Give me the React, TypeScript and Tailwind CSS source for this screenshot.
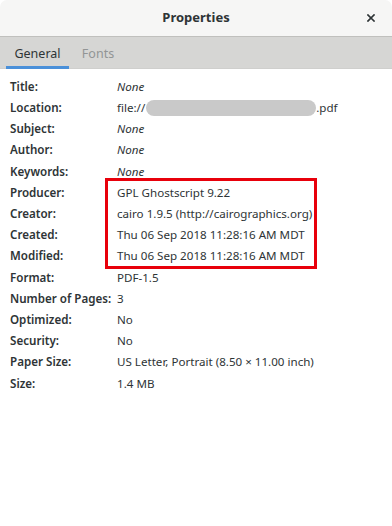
import React from 'react';

type Row = { label: string; value: React.ReactNode; italic?: boolean };

const rows: Row[] = [
    { label: 'Title:', value: 'None', italic: true },
    {
        label: 'Location:',
        value: (
            <span className="flex items-center">
                file://
                <span className="inline-block h-[16px] w-[170px] rounded-full bg-[#c9c9c9] ml-[1px]" />
                .pdf
            </span>
        ),
    },
    { label: 'Subject:', value: 'None', italic: true },
    { label: 'Author:', value: 'None', italic: true },
    { label: 'Keywords:', value: 'None', italic: true },
    { label: 'Producer:', value: 'GPL Ghostscript 9.22' },
    { label: 'Creator:', value: 'cairo 1.9.5 (http://cairographics.org)' },
    { label: 'Created:', value: 'Thu 06 Sep 2018 11:28:16 AM MDT' },
    { label: 'Modified:', value: 'Thu 06 Sep 2018 11:28:16 AM MDT' },
    { label: 'Format:', value: 'PDF-1.5' },
    { label: 'Number of Pages:', value: '3' },
    { label: 'Optimized:', value: 'No' },
    { label: 'Security:', value: 'No' },
    { label: 'Paper Size:', value: 'US Letter, Portrait (8.50 × 11.00 inch)' },
    { label: 'Size:', value: '1.4 MB' },
];

export default function App() {
    return (
        <div
            className="w-[392px] h-[526px] bg-white flex flex-col text-[#2e3436] overflow-hidden rounded-t-[7px]"
            style={{ fontFamily: '"Noto Sans", "Open Sans", sans-serif' }}
        >
            {/* header bar */}
            <div className="h-[37px] shrink-0 bg-[#f6f6f5] border-b border-[#c0c0bd] relative flex items-center justify-center">
                <span className="text-[13px] font-bold">Properties</span>
                <button className="absolute right-[14px] top-[11px] w-[14px] h-[14px] flex items-center justify-center">
                    <svg width="8" height="8" viewBox="0 0 8 8">
                        <path d="M1 1L7 7M7 1L1 7" stroke="#2e3436" strokeWidth="1.7" strokeLinecap="square" />
                    </svg>
                </button>
            </div>

            {/* tabs */}
            <div className="h-[32px] shrink-0 bg-[#d6d6d4] flex items-stretch pl-[6px] border-b border-[#cfcfcd]">
                <div className="relative w-[63px] flex items-center justify-center pt-[3px] text-[12.5px]">
                    General
                    <div className="absolute left-0 right-0 bottom-[-1px] h-[3px] bg-[#4a90d9]" />
                </div>
                <div className="w-[58px] flex items-center justify-center pt-[3px] text-[12.5px] text-[#929595]">
                    Fonts
                </div>
            </div>

            {/* properties */}
            <div className="relative pt-[7px] pl-[10px]">
                {rows.map((r) => (
                    <div key={r.label} className="flex items-center h-[21.2px] text-[11.6px]">
                        <span className="w-[107px] shrink-0 font-semibold">{r.label}</span>
                        <span className={r.italic ? 'italic' : ''}>{r.value}</span>
                    </div>
                ))}
                <div className="absolute left-[105px] top-[109px] w-[212px] h-[91px] border-[3px] border-[#e8000b]" />
            </div>
        </div>
    );
}
